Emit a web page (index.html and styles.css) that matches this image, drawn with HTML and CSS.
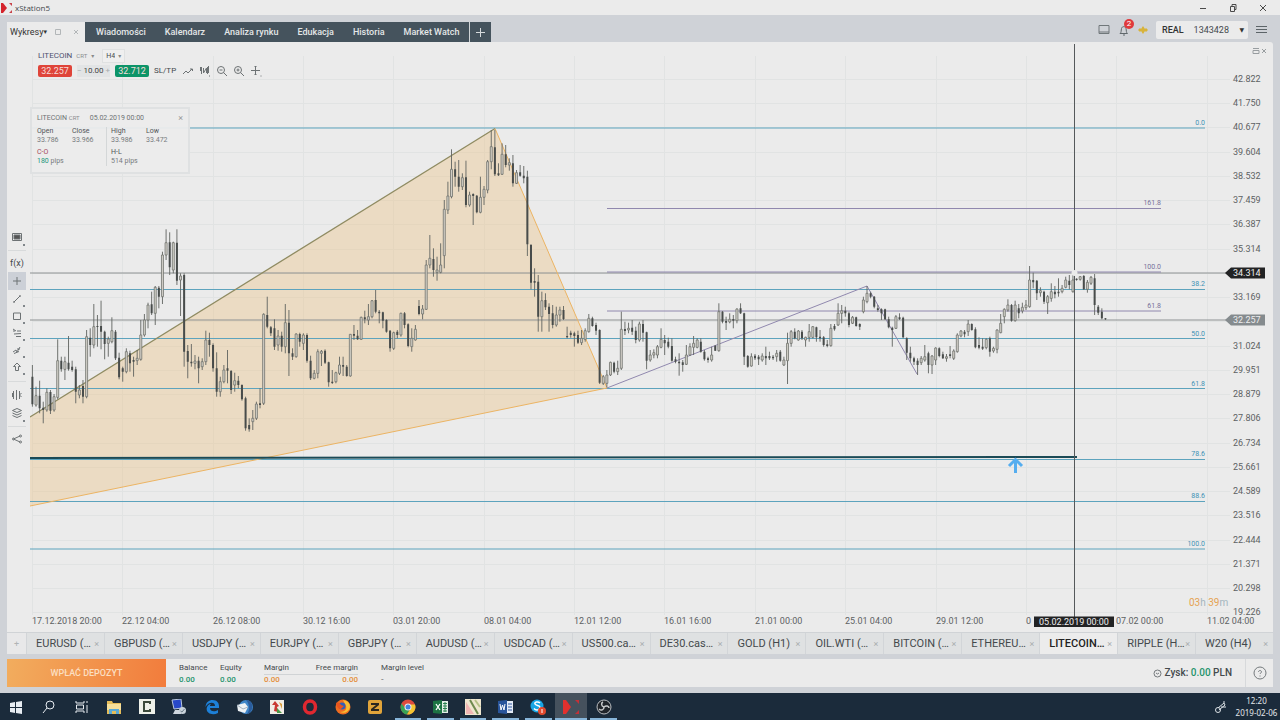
FILE: index.html
```html
<!DOCTYPE html>
<html lang="pl">
<head>
<meta charset="utf-8">
<title>xStation5</title>
<link rel="stylesheet" href="styles.css">
</head>
<body>
<header class="titlebar">
  <svg class="logo" width="12" height="14" viewBox="0 0 12 14"><path d="M1 2h2l4 5-4 5H1z" fill="#d4242c"/><path d="M9 2h3v3zM9 12h3V9z" fill="#c8434a"/></svg>
  <span class="titlebar-name">xStation5</span>
  <div class="window-buttons">
    <button aria-label="Minimize"><svg width="10" height="10" viewBox="0 0 10 10"><path d="M2 5.500h6"/></svg></button>
    <button aria-label="Restore"><svg width="10" height="10" viewBox="0 0 10 10"><path d="M2.500 3.500h4v5h-4zM4 3V1.500h4v5H7"/></svg></button>
    <button aria-label="Close"><svg width="10" height="10" viewBox="0 0 10 10"><path d="M2 2l6 6M8 2L2 8"/></svg></button>
  </div>
</header>

<div class="app">
  <nav class="topbar">
    <div class="tab-active">
      <button class="tab-title">Wykresy<span class="caret">▾</span></button>
      <button class="tab-tool" aria-label="Detach"><svg width="6" height="6" viewBox="0 0 6 6"><path d="M.5 .5h5v5h-5z"/></svg></button>
      <button class="tab-tool" aria-label="Close tab"><svg width="6" height="6" viewBox="0 0 6 6"><path d="M1 1l4 4M5 1L1 5"/></svg></button>
    </div>
    <div class="tabs">
      <button>Wiadomości</button><button>Kalendarz</button><button>Analiza rynku</button><button>Edukacja</button><button>Historia</button><button>Market Watch</button>
      <button class="tab-add" aria-label="Add tab"><svg width="11" height="11" viewBox="0 0 11 11"><path d="M5.500 1v9M1 5.500h9"/></svg></button>
    </div>
    <div class="top-actions">
      <button aria-label="Layout"><svg width="12" height="11" viewBox="0 0 12 11"><path d="M1 1.500h10v8H1zM1 8h10" fill="none" stroke="#70777a"/></svg></button>
      <button class="bell" aria-label="Notifications"><svg width="12" height="12" viewBox="0 0 12 12"><path d="M2 9.500c1.500-1 1-3 1.500-5 .5-2.500 4-2.500 4.500 0 .5 2 0 4 1.500 5zM5 11h2" fill="none" stroke="#60686c"/></svg><span class="badge">2</span></button>
      <button aria-label="Connection"><svg width="10" height="8" viewBox="0 0 10 8"><path d="M0 4l2-2 1 1 2-3 2 3 1-1 2 2-2 2-1-1-2 3-2-3-1 1z" fill="#d8b33a"/></svg></button>
      <div class="account"><label for="acc">REAL</label><select id="acc"><option>1343428</option></select><span class="caret">▼</span></div>
      <button class="menu" aria-label="Menu"><svg width="11" height="9" viewBox="0 0 11 9"><path d="M0 1.500h11M0 4.500h11M0 7.500h11" stroke="#5c6468"/></svg></button>
    </div>
  </nav>

  <main class="workspace">
    <aside class="tools">
      <button class="more" aria-label="Screen"><svg viewBox="0 0 12 12"><path d="M1.500 2.500h9v7h-9z"/><path d="M3 4h6v4H3z" fill="#555"/></svg></button>
      <hr>
      <button class="fx">f(x)</button>
      <button class="selected" aria-label="Crosshair"><svg viewBox="0 0 12 12"><path d="M6 2v8M2 6h8"/></svg></button>
      <button class="short more" aria-label="Line"><svg viewBox="0 0 12 12"><path d="M3 9l6-6"/><circle cx="3" cy="9" r=".5"/><circle cx="9" cy="3" r=".5"/></svg></button>
      <button class="short more" aria-label="Rectangle"><svg viewBox="0 0 12 12"><path d="M2.500 3h7v6.500h-7z"/></svg></button>
      <button class="short more" aria-label="Fibonacci"><svg viewBox="0 0 12 12"><path d="M2 2l3 2M6 4h4M3 7l7-.5M5 9.500h5M2 4h2"/></svg></button>
      <button class="short more" aria-label="Waves"><svg viewBox="0 0 12 12"><path d="M2 8l3-2 1 2 3-5M3 9.500l5-2M6 5h3"/></svg></button>
      <button class="short more" aria-label="Arrow"><svg viewBox="0 0 12 12"><path d="M6 2l3.500 3.500h-2v4h-3v-4h-2z"/></svg></button>
      <hr class="wide">
      <button aria-label="Candles"><svg viewBox="0 0 12 12"><path d="M2.500 2v8M1.500 4v4M5.500 1v10M8.500 2v8M10.500 4l-2 2 2 2"/></svg></button>
      <button class="more" aria-label="Layers"><svg viewBox="0 0 12 12"><path d="M6 1.500l4.500 2L6 5.500 1.500 3.500zM1.500 6L6 8l4.500-2M1.500 8.500l4.500 2 4.500-2"/></svg></button>
      <hr>
      <button aria-label="Share"><svg viewBox="0 0 12 12"><path d="M2.500 6L9 3M2.500 6L9 9"/><circle cx="2.500" cy="6" r="1"/><circle cx="9.500" cy="3" r="1"/><circle cx="9.500" cy="9" r="1"/></svg></button>
    </aside>

    <section class="chart">
      <svg class="plot" viewBox="30 42 1243 590" role="img" aria-label="LITECOIN H4">
        <g id="grid" class="grid"></g>
        <path class="pattern" d="M30 417L495 128.500 607 388 30 506z"/>
        <path class="fib" d="M30 128H1205M30 289.500H1205M30 338.500H1205M30 388.500H1205M30 459.500H1205M30 501.500H1205M30 549H1205"/>
        <path class="horizontal" d="M30 273H1228M30 320H1228"/>
        <path class="pattern-edge" d="M495 128.500L607 388 30 506"/>
        <path class="trend" d="M30 417L495 128.500"/>
        <path class="projection" d="M607 208.500H1161M607 272H1161M607 311H1161M607 388L867 286 917 374"/>
        <path id="wicks" class="wick"/><path id="hollow" class="hollow"/><path id="solid" class="solid"/>
        <path class="support" d="M30 458L1077 457"/>
        <path class="buy-arrow" d="M1015.500 473V461M1009 466l6.500-6.500L1022 466"/>
        <path class="crosshair" d="M1074.500 44V617"/>
        <circle cx="1074.500" cy="273" r="3" fill="#ececec"/>
        <g class="fib-labels"><text x="1205" y="125">0.0</text><text x="1205" y="286">38.2</text><text x="1205" y="336">50.0</text><text x="1205" y="386">61.8</text><text x="1205" y="456">78.6</text><text x="1205" y="498">88.6</text><text x="1205" y="546">100.0</text></g>
        <g class="projection-labels"><text x="1161" y="205">161.8</text><text x="1161" y="269">100.0</text><text x="1161" y="308">61.8</text></g>
        <g id="axis" class="axis"></g>
        <path d="M1225 273l6-5.500h34v11h-34z" fill="#222324"/><text class="price-tag" x="1233" y="276">34.314</text>
        <path d="M1225 320l6-5.500h34v11h-34z" fill="#858b8e"/><text class="price-tag" x="1233" y="323">32.257</text>
        <path d="M1034 616.500h80v10.500h-80z" fill="#222324"/><text class="price-tag date-tag" x="1074" y="625">05.02.2019 00:00</text>
        <text class="countdown" x="1189" y="606">03<tspan>h</tspan> 39<tspan>m</tspan></text>
        <path class="panel-icons" d="M1253 48.500h6M1253 50.500h6v3h-6zM1262 49l4 4M1266 49l-4 4"/>
      </svg>

      <div class="instrument">
        <div class="instrument-row">
          <button class="symbol">LITECOIN <small>CRT</small><span class="caret">▾</span></button>
          <label class="interval"><select aria-label="Interval"><option>H4</option></select><span class="caret">▾</span></label>
        </div>
        <div class="instrument-row trade">
          <button class="sell">32.257</button>
          <label class="lot"><span>−</span><input aria-label="Volume" value="10.00"><span>+</span></label>
          <button class="buy">32.712</button>
          <button class="sltp">SL/TP</button>
          <button aria-label="Chart type"><svg viewBox="0 0 12 12"><path d="M1 9l3-3 2 2 4-4M8 4h2.500v2"/></svg></button>
          <button aria-label="Candles"><svg viewBox="0 0 12 12"><path d="M2.500 2v7M1.500 2v4M4.500 3v5l3-5v5M8.500 2v7M9.500 1v7M10 11h1"/></svg></button>
          <button aria-label="Zoom out"><svg viewBox="0 0 12 12"><circle cx="5" cy="5" r="3.500"/><path d="M7.500 7.500L11 11M3.500 5h3"/></svg></button>
          <button aria-label="Zoom in"><svg viewBox="0 0 12 12"><circle cx="5" cy="5" r="3.500"/><path d="M7.500 7.500L11 11M3.500 5h3M5 3.500v3"/></svg></button>
          <button aria-label="Move"><svg viewBox="0 0 12 12"><path d="M5.500 1v9M1 5.500h9M4.500 2l1-1 1 1M4.500 9l1 1 1-1M10.500 11h1"/></svg></button>
        </div>
      </div>

      <div class="ohlc">
        <div class="ohlc-head"><span>LITECOIN <small>CRT</small></span><time>05.02.2019 00:00</time><button aria-label="Close">×</button></div>
        <div class="ohlc-grid">
          <dl><dt>Open</dt><dd>33.786</dd></dl><dl><dt>Close</dt><dd>33.966</dd></dl>
          <dl class="split"><dt>High</dt><dd>33.986</dd></dl><dl><dt>Low</dt><dd>33.472</dd></dl>
          <dl class="double"><dt class="neg">C-O</dt><dd><b>180</b> pips</dd></dl>
          <dl class="double split"><dt>H-L</dt><dd>514 pips</dd></dl>
        </div>
      </div>
    </section>
  </main>

  <nav class="symbols">
    <button class="symbol-add" aria-label="Add chart">+</button>
    <div><button>EURUSD (…</button><i>×</i></div><div><button>GBPUSD (…</button><i>×</i></div><div><button>USDJPY (…</button><i>×</i></div><div><button>EURJPY (…</button><i>×</i></div>
    <div><button>GBPJPY (…</button><i>×</i></div><div><button>AUDUSD (…</button><i>×</i></div><div><button>USDCAD (…</button><i>×</i></div><div><button>US500.ca…</button><i>×</i></div>
    <div><button>DE30.cas…</button><i>×</i></div><div><button>GOLD (H1)</button><i>×</i></div><div><button>OIL.WTI (…</button><i>×</i></div><div><button>BITCOIN (…</button><i>×</i></div>
    <div><button>ETHEREU…</button><i>×</i></div><div class="current"><button>LITECOIN…</button><i>×</i></div><div><button>RIPPLE (H…</button><i>×</i></div><div><button>W20 (H4)</button><i>×</i></div>
  </nav>

  <footer class="funds">
    <button class="deposit">WPŁAĆ DEPOZYT</button>
    <dl class="balance"><dt>Balance</dt><dd>0.00</dd></dl>
    <dl class="equity"><dt>Equity</dt><dd>0.00</dd></dl>
    <div class="margins"><dl><dt>Margin</dt><dd>0.00</dd></dl><dl><dt>Free margin</dt><dd>0.00</dd></dl></div>
    <dl class="level"><dt>Margin level</dt><dd>-</dd></dl>
    <div class="profit"><svg width="9" height="9" viewBox="0 0 9 9"><circle cx="4.500" cy="4.500" r="3.500"/><path d="M3 4l1.500 1L6 4"/></svg><span>Zysk: <b>0.00</b> PLN</span></div>
    <button class="help" aria-label="Help"><svg width="14" height="14" viewBox="0 0 14 14"><circle cx="7" cy="7" r="6"/><path d="M5.500 6c0-2 3-2 3 0 0 1-1.500 1-1.500 2M7 9.500v1"/></svg></button>
  </footer>
</div>

<footer class="taskbar">
  <div class="apps">
    <button aria-label="Start"><svg viewBox="0 0 16 16"><path d="M2 4l5-1v5H2zM8 3l6-1v6H8zM2 9h5v5l-5-1zM8 9h6v6l-6-1z" fill="#e8edf2"/></svg></button>
    <button aria-label="Search"><svg viewBox="0 0 16 16"><circle cx="9" cy="6" r="4" fill="none" stroke="#e8edf2"/><path d="M6 9l-4 5" stroke="#e8edf2"/></svg></button>
    <button aria-label="Task view"><svg viewBox="0 0 16 16"><path d="M2 2v2h8V2M2.500 6h7v4h-7zM2 14v-2h8v2M13 2v2M13 6v8" fill="none" stroke="#e8edf2"/></svg></button>
    <button aria-label="Files"><svg viewBox="0 0 16 16"><path d="M1 2h5l1 2h8v11H1z" fill="#e6bd59"/><path d="M1 5h14v6H1z" fill="#f6df9a"/><path d="M3 15v-5h10v5h-3v-3H6v3z" fill="#5aa9d6"/></svg></button>
    <button aria-label="Camtasia"><svg viewBox="0 0 16 16"><path d="M0 0h16v15H0z" fill="#eef1ea"/><path d="M11 5V3H5v9h6v-2" fill="none" stroke="#3c4a3c" stroke-width="2"/></svg></button>
    <button aria-label="Remote"><svg viewBox="0 0 16 16"><path d="M1 1l9-1 1 9-8 1z" fill="#2848c8" stroke="#b8c6dc"/><path d="M4 11h6v4H2z" fill="#cfd6df"/><circle cx="11.500" cy="11.500" r="3.500" fill="#c8d2da"/><path d="M9.500 12l1.500 1 2.500-3" stroke="#6c7c88" fill="none"/></svg></button>
    <button aria-label="Edge"><svg viewBox="0 0 16 16"><path d="M1.500 8C2 3 5 1 8.500 1 13 1 15 4 15 7v2H6c0 4 5 4 8 2v3C8 17 1 14 3 8c1-2 2-3 4-3-1 1-1 1.500-1 2h5c0-5-7-4-9.500 1z" fill="#1d80d8"/></svg></button>
    <button aria-label="Mail"><svg viewBox="0 0 16 16"><circle cx="9" cy="8" r="7" fill="#3f86c8"/><path d="M9 1c5 0 7 4 6 9-1 3-3 5-5 5 3-4 3-9-1-14z" fill="#2a5c9c"/><path d="M0 6l8-2 3 4-3 6-7-2z" fill="#eef2f5"/><path d="M0 6l6 4 5-2" stroke="#a0b0c0" fill="none"/></svg></button>
    <button aria-label="Charts"><svg viewBox="0 0 16 16"><path d="M1 1h14v14H1z" fill="#f2eee6"/><path d="M3 6l3-4 4 5-2 1 1 5-4-1 1-6z" fill="#c93a32"/><path d="M8 9l5 5H8z" fill="#4e9a48"/><path d="M10 3l3 2v5z" fill="#d89b3a"/></svg></button>
    <button aria-label="Opera"><svg viewBox="0 0 16 16"><ellipse cx="8" cy="8" rx="5.500" ry="6" fill="none" stroke="#e02830" stroke-width="3.500"/></svg></button>
    <button aria-label="Firefox"><svg viewBox="0 0 16 16"><circle cx="8" cy="8" r="7.500" fill="#ee6c20"/><path d="M8 1c5 1 7 3 7 7-1 5-6 7-10 5 5 0 7-3 6-6z" fill="#f8bd32"/><circle cx="7" cy="7" r="3.500" fill="#315fb8"/><path d="M1 4c2-1 4 0 5 2l3 1-3 3c-3 0-4-2-5-6z" fill="#e8541e"/></svg></button>
    <button aria-label="Z"><svg viewBox="0 0 16 16"><rect x="1" y="1" width="14" height="14" rx="2" fill="#e0a43a"/><path d="M4 4h8v2l-5 4h5v2H4v-2l5-4H4z" fill="#2a2620"/></svg></button>
    <button class="open" aria-label="Chrome"><svg viewBox="0 0 16 16"><circle cx="8" cy="8" r="7.500" fill="#dd4b3e"/><path d="M1.500 4.500A7.500 7.500 0 0 0 7 15.500L10.500 9 5 9z" fill="#38a456"/><path d="M15 5.500a7.500 7.500 0 0 1-8 10L11 9V5.500z" fill="#f2c532"/><circle cx="8" cy="8" r="3.500" fill="#eee"/><circle cx="8" cy="8" r="2.500" fill="#4283e0"/></svg></button>
    <button class="open" aria-label="Excel"><svg viewBox="0 0 16 16"><path d="M8 2h7v12H8z" fill="#e3efe6"/><path d="M10 4.500h4M10 7h4M10 9.500h4M10 12h4M12 3v10" stroke="#2c8352"/><path d="M0 2l9-1v14l-9-1z" fill="#1d7344"/><path d="M3 5l4 6M7 5l-4 6" stroke="#fff" stroke-width="1.300"/></svg></button>
    <button class="open" aria-label="Notes"><svg viewBox="0 0 16 16"><path d="M0 0h16v16H0z" fill="#eee6cf"/><path d="M1 3l8 12H1z" fill="#f0b6b4"/><path d="M5 1l8 14" stroke="#6f8a4e" stroke-width="2"/><path d="M10 1l5 7" stroke="#b6c187" stroke-width="2"/></svg></button>
    <button class="open" aria-label="Word"><svg viewBox="0 0 16 16"><path d="M8 2h7v12H8z" fill="#e4ebf5"/><path d="M10 5h4M10 8h4M10 11h4" stroke="#2c57a0"/><path d="M0 2l9-1v14l-9-1z" fill="#29559b"/><path d="M2 5l1 6 1.500-5L6 11l1-6" stroke="#fff" fill="none"/></svg></button>
    <button class="open" aria-label="Skype"><svg viewBox="0 0 16 16"><circle cx="7" cy="7" r="6.500" fill="#19a5e4"/><path d="M10 4C8 2 4 3 5 5c1 2 5 1 5 3.500S6 12 4 9.500" fill="none" stroke="#fff" stroke-width="1.500"/><circle cx="12" cy="12" r="4" fill="#e0492e"/><path d="M12 10v4" stroke="#fff"/></svg></button>
    <button class="open active" aria-label="xStation5"><svg viewBox="0 0 16 16"><path d="M0 1h3l5 7-5 7H0z" fill="#e3302e"/><path d="M12 1h4v4zM12 15h4v-4z" fill="#c23038"/></svg></button>
    <button class="open" aria-label="OBS"><svg viewBox="0 0 16 16"><circle cx="8" cy="8" r="7" fill="#20252b" stroke="#b9bdc0"/><path d="M8 8C5 7 5 4 7 3M8 8c2-2 5-1 5 1M8 8c0 3-3 4-5 2" fill="none" stroke="#c6c9cb" stroke-width="1.500"/></svg></button>
  </div>
  <svg class="tray" width="14" height="14" viewBox="0 0 14 14"><circle cx="4" cy="10" r="2.500"/><path d="M4 8l6-5 1 2-6 5M7 7h5M9 2h2"/></svg>
  <time class="clock">12:20<br>2019-02-06</time>
</footer>
<script src="chart.js"></script>
</body>
</html>
```
FILE: styles.css
```css
* { box-sizing: border-box; }
body { margin: 0; min-height: 100vh; display: flex; flex-direction: column; background: #cfd2d7; color: #454a4d; font: 9px/12px Roboto, sans-serif; }
button, select, input { font: inherit; color: inherit; border: 0; padding: 0; margin: 0; background: none; appearance: none; }
button { display: flex; align-items: center; justify-content: center; white-space: nowrap; }
dl, dd { margin: 0; }
svg { display: block; }
.caret { font-family: "DejaVu Sans", sans-serif; font-size: 7px; }

.titlebar { height: 15px; display: flex; align-items: center; background: #ebebeb; }
.titlebar-name { font: 8px/12px "Open Sans", sans-serif; margin-left: 3px; flex: 1; }
.window-buttons { display: flex; gap: 20px; padding-right: 12px; }
.window-buttons path { fill: none; stroke: #4a4a4a; }

.app { flex: 1; display: flex; flex-direction: column; padding: 0 7px 6px; }
.topbar { display: flex; height: 27px; padding-top: 7px; }
.tab-active { width: 78px; display: flex; align-items: center; background: #ebebeb; padding: 0 0 0 3px; }
.tab-title { flex: 1; justify-content: flex-start; color: #333; }
.tab-tool { width: 18px; }
.tab-tool path { fill: none; stroke: #b2b6b8; }
.tabs { display: flex; gap: 1px; background: #45535d; padding-left: 2px; }
.tabs button { padding: 0 9px; color: #e4e7e8; font-weight: 500; }
.tabs .tab-add { width: 22px; padding: 0; border-left: 1px solid #d0d4d7; }
.tab-add path { stroke: #d6dadc; }
.top-actions { display: flex; align-items: center; gap: 8px; margin: -5px 0 0 auto; padding: 0 6px 0 0; }
.bell { position: relative; }
.badge { position: absolute; left: 6px; top: -5px; width: 10px; height: 10px; border-radius: 50%; background: #e0393b; color: #fff; font-size: 8px; line-height: 10px; }
.account { width: 92px; height: 18px; display: flex; align-items: center; gap: 10px; padding: 0 6px; background: #ebebeb; border-radius: 2px; }
.account label { font-weight: 500; color: #333; }
.account select { flex: 1; }
.account .caret { font-size: 6px; color: #333; }

.workspace { flex: 1; display: grid; grid-template-columns: 23px 1fr; background: #ebebeb; border-radius: 0 3px 0 0; }
.tools { padding: 186px 4px 0 1px; }
.tools button { position: relative; width: 18px; height: 18px; font-size: 9px; }
.tools .short { height: 17px; }
.tools svg, .trade svg { width: 12px; height: 12px; fill: none; stroke: #6d7274; }
.tools hr { border: 0; border-top: 1px solid #d8dadb; margin: 4px 0 3px; }
.tools hr.wide { margin: 6px 0 4px; }
.tools .selected { background: #ccd0d7; }
.tools .more::after { content: ""; position: absolute; right: 1px; bottom: 0; width: 2px; height: 2px; background: #80868a; }
.chart { position: relative; }
.plot { width: 100%; height: auto; }
.grid path { stroke: #e1e3e3; fill: none; }
.pattern { fill: #ecc488; fill-opacity: .4; }
.pattern-edge { fill: none; stroke: #ecb463; }
.trend { stroke: #8f8b62; stroke-width: 1.300; }
.fib { stroke: #5da3bd; stroke-width: 1.200; fill: none; }
.horizontal { stroke: #8d9192; }
.projection { stroke: #9088ae; fill: none; }
.wick { stroke: #606360; stroke-width: .9; }
.hollow { fill: #e9e5dc; fill-opacity: .8; stroke: #6f716c; stroke-width: .8; }
.solid { fill: #484c4b; }
.support { stroke: #1b4a56; stroke-width: 2; }
.buy-arrow { fill: none; stroke: #55adef; stroke-width: 3; }
.crosshair { stroke: #55595b; }
.fib-labels, .projection-labels { font-size: 7px; text-anchor: end; fill: #3f92b5; }
.projection-labels { fill: #78719a; }
.axis { font-size: 9px; fill: #5d6163; }
.price-tag { font-size: 9px; fill: #eee; }
.date-tag { text-anchor: middle; }
.countdown { font-size: 10px; fill: #e5a353; }
.countdown tspan { fill: #a3b5be; }
.panel-icons { stroke: #989da0; fill: none; }

.instrument { position: absolute; left: 8px; top: 8px; }
.instrument-row { display: flex; align-items: center; height: 12px; font-size: 8px; }
.symbol { gap: 4px; color: #4e5070; }
.instrument .caret { font-size: 6px; color: #888; }
.symbol small, .ohlc small { font-size: 6px; color: #8a8e90; }
.interval { display: flex; align-items: center; gap: 3px; margin-left: 8px; padding: 0 3px; background: #efefef; border: 1px solid #dfe1e1; }
.interval select { font-size: 7px; line-height: 8px; }
.trade { margin-top: 3px; gap: 5px; }
.sell, .buy { width: 34px; height: 12px; border-radius: 2px; color: #f6dedb; font-size: 9px; }
.sell { background: #df4439; }
.buy { background: #0c9468; }
.lot { display: flex; justify-content: space-between; width: 33px; background: #e2e4e5; color: #777; }
.lot input { width: 20px; text-align: center; font-size: 8px; color: #444; }
.lot span { color: #a5aaac; }
.trade .sltp { margin: 0 1px 0 0; }

.ohlc { position: absolute; left: 0; top: 65px; width: 160px; height: 67px; padding: 3px 5px; border: 2px solid #dfe1e2; background: rgba(236, 236, 236, .94); font-size: 7px; line-height: 9px; }
.ohlc-head { display: flex; align-items: center; gap: 10px; height: 12px; }
.ohlc-head button { margin-left: auto; font-size: 9px; color: #999; }
.ohlc-head time, .ohlc-head span { color: #6e7274; }
.ohlc-grid { display: grid; grid-template-columns: 35px 38px 36px 1fr; margin-top: 3px; }
.ohlc-grid dt { color: #505456; }
.ohlc-grid dd { color: #777b7d; }
.ohlc-grid .double { grid-column: span 2; padding-top: 3px; }
.ohlc-grid .split { border-left: 1px solid #d4d7d8; padding-left: 4px; margin-left: -4px; }
.ohlc b { color: #23967a; font-weight: 400; }
.ohlc .neg { color: #a5475a; }

.symbols { display: flex; height: 22px; background: #dfe1e2; border-top: 1px solid #d0d3d6; }
.symbols .symbol-add { width: 19px; background: #e8e8e9; color: #b0b3b5; }
.symbols div { flex: 1 1 0; min-width: 0; display: flex; align-items: center; justify-content: space-between; padding: 0 5px 0 9px; border-left: 1px solid #d2d5d8; }
.symbols div button { font-size: 11px; color: #44494c; }
.symbols i { font-style: normal; color: #a9adb0; }
.symbols .current { background: #ececec; }
.symbols .current button { font-weight: 500; color: #222; }

.funds { display: flex; height: 28px; margin-top: 5px; background: #ebebeb; font-size: 8px; }
.deposit { width: 159px; font-size: 9px; font-weight: 500; color: #fbdfc2; background: linear-gradient(100deg, #f2ad5e, #f27c3c); }
.funds dl { padding-top: 3px; }
.funds dd { color: #24936c; font-weight: 500; }
.balance { margin-left: 13px; width: 41px; }
.equity { width: 44px; }
.margins { display: flex; justify-content: space-between; width: 94px; background: linear-gradient(#d0d3d5, #d0d3d5) 0 15px / 100% 1px no-repeat; }
.margins dl + dl { text-align: right; }
.funds .margins dd { color: #e58e39; }
.level { margin-left: 23px; }
.funds .level dd { color: #777; }
.profit { margin-left: auto; display: flex; align-items: center; gap: 3px; padding-right: 13px; font-size: 10px; font-weight: 500; }
.profit b { color: #24936c; font-weight: 500; }
.profit svg, .help svg { fill: none; stroke: #757a7d; }
.help { width: 28px; border-left: 1px solid #d7d9db; }

.taskbar { display: flex; align-items: center; height: 27px; background: #1b2b3b; color: #e2e7ea; }
.apps { display: grid; grid-template-columns: repeat(19, 1fr); width: 620px; height: 27px; }
.apps button { position: relative; }
.apps svg { width: 16px; height: 16px; }
.apps .open::after { content: ""; position: absolute; left: 3px; right: 3px; bottom: 0; height: 2px; background: #87b5d9; }
.apps .active { background: #45515d; }
.apps .active::after { left: 0; right: 0; }
.tray { margin-left: auto; fill: none; stroke: #dbe1e5; }
.clock { width: 45px; margin: 0 1px 0 6px; text-align: center; font: 8px/12px "Noto Sans", sans-serif; }
```
FILE: chart.js
```js
// Each row is one H4 bar: high, body top, body bottom, low, filled flag.
// Values are thirds of a plot unit below the base of their segment.
const segments = [
  { base: 190, bars: `525 560 643 650 1,590 617 645 650 0,572 617 655 670 1,635 653 660 700 1,595 607 660 665 0,600 606 662 672 1,612 620 660 665 0,448 512 622 628 0,500 512 538 545 1,500 515 538 570 0,438 518 538 542 1,512 530 540 545 1,530 538 605 640 1,585 600 615 625 0,570 588 620 640 1,420 440 620 625 0,415 443 465 500 1,342 410 465 475 0,375 408 410 470 1,332 408 425 478 1,422 425 462 508 1,440 447 460 500 0,382 422 455 460 0,420 425 505 510 1,488 503 562 568 1,530 535 545 575 1,475 485 545 550 0,482 490 520 545 1,500 510 515 560 1,480 505 512 525 0,390 435 508 512 0,372 390 435 440 0,338 345 390 415 0,305 343 370 375 1,288 292 370 405 0,288 293 320 355 1,185 195 320 342 0,118 158 195 210 0,127 157 232 255 1,155 158 240 250 0,118 158 272 285 1,250 258 270 378 0,250 255 485 530 1,465 483 515 565 1,462 515 520 530 1,495 513 520 538 0,500 512 535 580 1,505 515 530 540 0,422 450 515 525 0,428 450 465 500 1,460 465 535 545 1,487 535 605 620 1,560 575 605 620 0,525 540 575 580 0,480 535 542 580 1,540 543 600 612 1,548 572 585 605 0,558 572 585 595 1,583 585 628 632 1,620 625 715 722 1,685 705 718 725 1,660 685 695 720 0,635 642 685 690 0,595 640 645 655 1,370 373 640 645 0,320 375 410 415 1,408 412 430 438 1,388 415 470 480 1,420 438 465 482 0,425 437 470 485 1,342 398 470 490 0,360 398 490 558 1,475 490 500 510 1,430 432 500 503 0,428 432 455 470 1,430 435 460 480 0,430 435 512 518 1,497 512 565 570 1,540 550 565 568 0,478 485 550 565 0` },
  { base: 110, bars: `720 724 730 768 0,718 722 758 762 1,755 757 817 830 1,780 815 819 822 1,785 788 815 820 0,740 765 790 795 0,740 765 770 798 1,765 770 798 800 1,672 673 798 800 0,645 672 677 690 1,660 677 688 690 1,620 622 688 690 0,602 622 628 640 1,582 620 630 645 0,570 572 620 625 0,540 570 605 610 1,600 605 610 640 1,605 607 632 655 1,628 630 665 668 1,660 662 715 725 1,665 668 715 720 0,660 665 675 685 1,608 610 675 680 0,606 610 645 655 1,640 643 708 712 1,655 685 710 725 0,645 658 690 692 0,570 588 612 616 1,585 597 612 628 0,450 465 598 600 0,375 445 465 475 0,415 447 480 500 1,440 480 487 512 0,400 465 487 490 0,270 298 437 475 0,215 258 300 312 0,118 178 260 265 0,155 178 200 230 1,150 200 230 245 1,190 203 230 240 0,152 202 285 292 1,245 255 285 290 0,250 252 258 345 1,255 257 307 310 1,200 262 307 310 0,228 238 262 285 0,150 155 240 250 0,60 110 155 178 0,60 112 193 198 1,160 190 196 198 1,100 133 193 195 0,105 133 165 172 1,145 158 165 182 0,135 160 220 230 1,180 188 220 222 0,165 187 197 200 1,168 197 205 220 1,182 200 403 438 1,402 405 518 538 1,475 513 518 560 1,495 515 620 665 1,545 572 620 665 0,550 570 592 600 1,580 590 612 665 1,585 610 645 655 1,590 615 645 650 0,590 600 615 635 0,588 600 627 630 1,650 678 682 685 1,662 668 675 683 1,665 670 678 710 1,662 675 698 702 1,660 685 698 705 0,655 662 688 695 0,612 625 665 668 0,620 625 648 650 1,638 645 662 675 1,658 660 818 822 1,795 800 820 825 0,780 795 820 832 0,755 757 795 798 0,755 758 785 790 1,752 775 785 795 0,605 658 775 780 0` },
  { base: 250, bars: `215 237 243 255 1,218 235 240 250 0,210 233 245 255 1,230 242 270 280 1,215 222 270 275 0,210 222 248 275 1,245 247 332 358 1,300 315 330 335 0,298 308 315 325 0,285 290 315 325 0,235 268 292 295 0,255 270 280 315 1,263 275 290 295 1,265 288 332 335 1,320 328 335 340 1,310 335 340 377 1,330 337 345 365 1,285 315 343 345 0,280 290 315 318 0,258 280 292 315 0,265 270 292 295 0,265 275 305 308 1,300 305 328 332 1,320 325 330 338 1,290 315 330 335 0,285 287 302 303 1,160 185 302 305 0,183 185 215 220 1,200 213 218 240 1,190 208 216 220 0,195 207 212 235 1,175 177 212 220 0,160 175 190 192 1,188 190 320 345 1,315 318 350 353 1,310 320 348 350 0,312 317 325 330 1,315 320 328 345 1,310 318 330 335 0,290 318 325 345 1,305 318 325 330 1,315 320 325 330 1,300 310 320 335 0,300 305 332 335 1,320 330 345 348 0,248 280 332 402 0,240 245 280 290 0,235 245 265 268 1,240 243 270 272 0,240 245 265 270 1,260 262 270 290 0,222 245 262 275 0,228 230 262 265 0,230 232 262 275 1,240 260 265 275 1,258 262 285 290 1,270 283 288 292 1,222 235 287 290 0,222 228 238 242 1,160 190 225 228 0,165 182 190 220 0,170 182 190 200 1,185 190 225 232 1,198 202 220 222 0,200 202 228 230 1,220 222 230 240 1,140 150 185 190 0,108 130 155 160 0,125 130 140 145 1,138 140 170 175 1,165 175 180 185 1,175 178 190 210 1,176 178 208 210 1,200 208 232 235 1,230 233 240 290 1,195 200 235 237 0,190 202 207 210 1,200 203 262 265 1,262 265 308 330 1,290 308 325 335 1,320 325 335 345 1,325 332 345 375 1,318 325 338 345 0,285 320 330 335 0,305 310 345 370 1,315 318 345 372 0,292 294 330 345 0,292 295 318 322 1,305 313 325 327 1,312 320 325 335 0,288 313 318 325 1,298 303 325 330 0,250 255 305 308 0,240 243 258 262 0,240 245 253 262 1,210 222 245 258 0,220 222 240 242 1,232 238 292 295 1,262 285 293 298 1,265 290 296 300 1,265 268 293 298 0,260 265 305 320 1,290 295 303 308 0,238 240 298 310 0,192 220 248 250 0,175 178 200 220 0,148 165 180 185 0,162 165 212 215 1,152 165 212 215 0,162 175 190 205 1,158 172 183 190 0,150 165 173 180 0,48 90 170 173 0,68 90 97 115 1,90 92 130 150 1,112 122 128 140 0,122 125 155 162 1,135 140 158 192 0,100 125 145 155 0,108 125 133 145 1,85 125 130 140 1,105 115 125 130 0,80 90 112 115 0,75 92 105 118 1,70 90 125 128 0,85 86 90 92 1,78 80 88 92 0,75 78 118 120 1,90 97 118 128 0,78 82 100 105 0,72 85 165 195 1,165 170 188 195 1,175 185 205 208 1,204 205 208 210 1` }
];

let index = 0;
const paths = { wicks: "", hollow: "", solid: "" };
for (const { base, bars } of segments) {
  for (const row of bars.split(",")) {
    const [high, top, bottom, low, filled] = row.split(" ").map(Number);
    const x = 32.4 + 3.613 * index++;
    const y = (v) => (base + v / 3).toFixed(1);
    const height = Math.max(1, (bottom - top) / 3);
    paths.wicks += `M${x} ${y(high)}V${y(low)}`;
    paths[filled ? "solid" : "hollow"] += `M${x - 1} ${y(top)}h2v${height}h-2z`;
  }
}
for (const id in paths) document.getElementById(id).setAttribute("d", paths[id]);

const prices = "42.822 41.750 40.677 39.604 38.532 37.459 36.387 35.314 34.242 33.169 32.097 31.024 29.951 28.879 27.806 26.734 25.661 24.589 23.516 22.444 21.371 20.298 19.226".split(" ");
const times = ["17.12.2018 20:00", "22.12 04:00", "26.12 08:00", "30.12 16:00", "03.01 20:00", "08.01 04:00", "12.01 12:00", "16.01 16:00", "21.01 00:00", "25.01 04:00", "29.01 12:00", "0", "07.02 00:00", "11.02 04:00"];
// Prices whose label would sit under a price tag are left out.
const covered = ["34.242", "32.097"];
let grid = "", axis = "";
prices.forEach((price, i) => {
  const y = Math.round(79 + i * 24.24);
  grid += `<path d="M32 ${y}.5H1230"/>`;
  if (!covered.includes(price)) axis += `<text x="1233" y="${y + 3}">${price}</text>`;
});
times.forEach((time, i) => {
  const x = Math.round(32 + i * 90.35);
  grid += `<path d="M${x}.5 56V615"/>`;
  axis += `<text x="${x}" y="624">${time}</text>`;
});
document.getElementById("grid").innerHTML = grid;
document.getElementById("axis").innerHTML = axis;
```
